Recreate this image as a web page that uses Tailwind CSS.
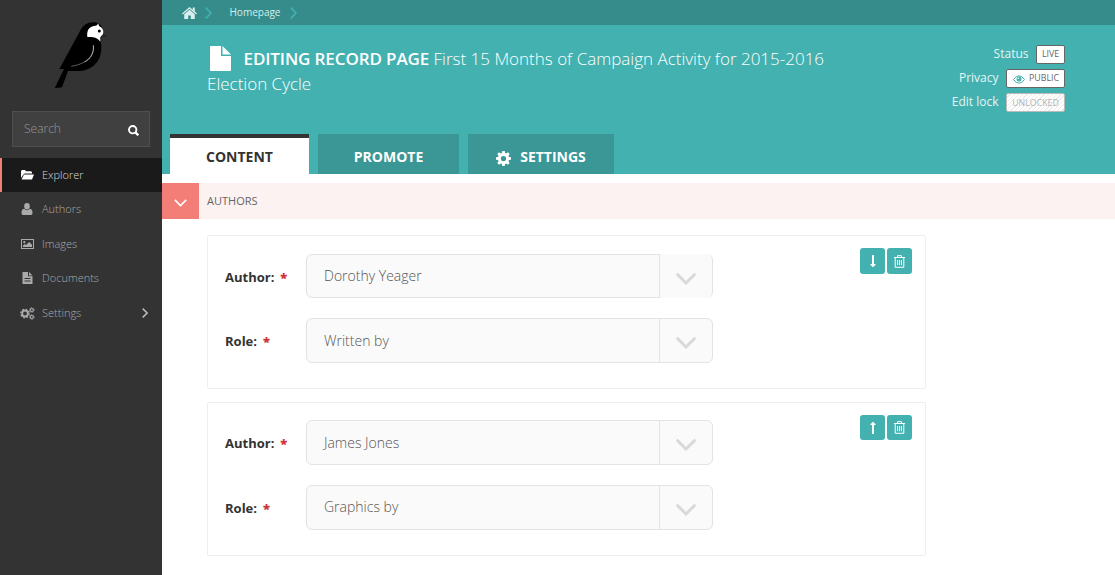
<!DOCTYPE html>
<html lang="en">
<head>
<meta charset="utf-8">
<title>Editing record page</title>
<script src="https://cdn.jsdelivr.net/npm/@tailwindcss/browser@4"></script>
</head>
<body class="flex h-[575px] w-[1115px] overflow-hidden bg-white font-['Open_Sans',sans-serif] whitespace-nowrap">
<svg class="hidden">
  <symbol id="chev" viewBox="0 0 20 12"><path d="M1.6 1.6 10 10l8.400-8.400" fill="none" stroke="currentColor" stroke-width="2.900" stroke-linecap="round"/></symbol>
  <symbol id="trash" viewBox="0 0 11 13"><path d="M0 2.500h11M3.500 2.500V.7h4v1.800M1.200 2.500v9.800h8.600V2.500M3.600 5v5.200M5.500 5v5.200M7.400 5v5.200" fill="none" stroke="currentColor"/></symbol>
  <symbol id="arrow" viewBox="0 0 6 12"><path d="M2 0h2v9h1.500v1L4.200 11 3.500 12h-1L1.800 11 .5 10V9H2z" fill="currentColor"/></symbol>
  <symbol id="gear" viewBox="0 0 16 16"><path fill="currentColor" fill-rule="evenodd" d="M6.700 0h2.600l.4 2.200 1.100.5 1.900-1.300 1.900 1.900-1.300 1.900.5 1.100 2.200.4v2.600l-2.200.4-.5 1.100 1.300 1.900-1.900 1.900-1.900-1.300-1.100.5-.4 2.200H6.700l-.4-2.200-1.100-.5-1.900 1.300-1.900-1.900 1.300-1.900-.5-1.100L0 9.300V6.700l2.200-.4.5-1.100-1.300-1.900 1.900-1.900 1.900 1.300 1.100-.5zM8 5.200a2.800 2.800 0 1 0 0 5.600 2.800 2.800 0 0 0 0-5.600z"/></symbol>
</svg>

<aside class="flex h-full w-[162px] shrink-0 flex-col bg-[#333]">
  <svg class="mt-[18px] ml-[50px] h-[74px] w-[62px] shrink-0" viewBox="150 54 186 222">
    <path d="M305 96l18 14h-22z" fill="#2a2627"/>
    <path d="M178 207 240 93C250 75 262 67 280 67c16 0 26 8 28 22l-6 34c2 8 2 16 2 24-2 42-32 68-76 66h-24l-18 49-22 3 28-58z"/>
    <path d="M262 111c-2-18 4-31 20-33 6 0 10-1 12-8l4 9c8 4 12 10 12 18 0 8-7 10-9 15v13c-8-12-20-15-39-14z" fill="#fff"/>
    <circle cx="298" cy="93" r="4.500"/>
    <path d="M280 136c3 32-22 56-66 63" fill="none" stroke="#aaa" stroke-width="1.600"/>
    <path d="M280 136c3 22-7 40-26 50" fill="none" stroke="#ddd" stroke-width="2"/>
  </svg>
  <div class="mt-[19px] ml-3 flex h-9 w-[138px] shrink-0 items-center justify-between border border-[#4f4f4f] bg-[#404040] pr-[10px] pl-[11px] text-[#999]">
    <span class="pb-[1px] text-[12px] font-light">Search</span>
    <svg class="mt-[2px] h-[11px] w-[11px]" viewBox="0 0 11 11" fill="none" stroke="#fff" stroke-width="1.900"><circle cx="4.700" cy="4.700" r="3.700"/><path d="m7.300 7.300 3 3" stroke-width="2.300"/></svg>
  </div>
  <nav class="mt-[11px] flex flex-col text-[11px] font-light text-[#aaa]">
    <a class="flex h-[34px] items-center border-l-2 border-[#f37e77] bg-[#1a1a1a] pl-[19px] text-white"><svg class="mr-[8px] h-[10px] w-[13px]" viewBox="0 0 13 10" fill="currentColor"><path d="M0 8V1l1-1h3l1 1.200h5l1 1V3.500H3.500L2 5z"/><path d="M.5 9.500 3 4.600h10L11 9.500z"/></svg><span class="text-[#ddd]">Explorer</span></a>
    <a class="flex h-[34px] items-center pl-[21px]"><svg class="mr-[9px] h-[12px] w-[12px]" viewBox="0 0 12 12" fill="currentColor"><ellipse cx="6" cy="3.300" rx="2.800" ry="3.300"/><path d="M3 5.700Q6 8.600 9 5.700c2 .3 2.500 2 2.500 4.300q0 2-1.500 2H2Q.5 12 .5 10C.5 7.700 1 6 3 5.700z"/></svg><span>Authors</span></a>
    <a class="flex h-[35px] items-center pt-[1px] pl-[21px]"><svg class="mr-[8px] h-[10px] w-[13px]" viewBox="0 0 13 10" fill="currentColor"><rect x=".5" y=".5" width="12" height="9" fill="none" stroke="currentColor"/><circle cx="3.300" cy="3.200" r="1.100"/><path d="M2 8V6.500l1.700-1.500 1.300 1L8.200 3 11 5.800V8z"/></svg><span>Images</span></a>
    <a class="flex h-[34px] items-center pl-[22px]"><svg class="mr-[9px] h-[12px] w-[11px]" viewBox="0 0 11 12"><path fill="currentColor" fill-rule="evenodd" d="M.5 0H6v4.300h4.500V12H.5zM2.500 6v1h6V6zm0 2.500v1h6v-1z"/><path fill="currentColor" d="M7 0l3.500 3.400H7z"/></svg><span>Documents</span></a>
    <a class="flex h-[35px] items-center pt-[1px] pr-[14px] pl-[20px]"><svg class="mr-[7px] h-[13px] w-[15px]" viewBox="0 0 15 13"><g fill="none" stroke="currentColor"><circle cx="5" cy="6.500" r="2.900" stroke-width="2"/><circle cx="5" cy="6.500" r="4.300" stroke-width="1.200" stroke-dasharray="1.700 1.680"/><circle cx="11.800" cy="3" r="1.500" stroke-width="1.200"/><circle cx="11.800" cy="10" r="1.500" stroke-width="1.200"/><circle cx="11.800" cy="3" r="2.400" stroke-width=".8" stroke-dasharray="1 .88"/><circle cx="11.800" cy="10" r="2.400" stroke-width=".8" stroke-dasharray="1 .88"/></g></svg><span>Settings</span><svg class="ml-auto h-[10px] w-[6px]" viewBox="0 0 6 10" fill="none" stroke="#bbb" stroke-width="1.500"><path d="m.7.6 4.400 4.400L.7 9.400"/></svg></a>
  </nav>
</aside>

<main class="flex w-[953px] flex-col">
  <div class="flex h-[25px] shrink-0 items-center bg-[#368c8a] pl-[20px] text-[10px] text-[#d5edec]">
    <svg class="mt-[1px] h-[12px] w-[15px]" viewBox="0 0 15 12" fill="#d9efee"><path d="M7.500 0 0 6.500l.8.900L7.500 1.700l6.700 5.700.8-.9-2.200-2V.6h-2v2.200z"/><path d="M7.500 2.800 2.200 7.300V12h4V8.600h2.600V12h4V7.300z"/></svg>
    <svg class="mt-[1px] ml-[8px] h-[12px] w-[7px]" viewBox="0 0 7 12" fill="none" stroke="#43b1b0" stroke-width="1.700"><path d="m.8.700 5.100 5.300-5.100 5.300"/></svg>
    <span class="ml-[17.5px] w-[51.5px]">Homepage</span>
    <svg class="mt-[1px] ml-[9px] h-[12px] w-[7px]" viewBox="0 0 7 12" fill="none" stroke="#43b1b0" stroke-width="1.700"><path d="m.8.700 5.100 5.300-5.100 5.300"/></svg>
  </div>
  <header class="flex h-[149px] shrink-0 flex-col justify-between bg-[#43b1b0]">
    <div class="flex justify-between pt-[18px] pr-[50px] pl-[45px]">
      <h1 class="pt-[3px] text-[17px] leading-[25px] font-light text-white"><svg class="mr-[12px] ml-[3px] inline-block h-[25px] w-[21px] align-[-6px]" viewBox="0 0 21 25" fill="#fff"><path d="M1 0h10v10h10v14q0 1-1 1H1q-1 0-1-1V1q0-1 1-1z"/><path d="M12.500 0 21 8.500h-8.500z"/></svg><span class="ml-[0.5px] font-semibold tracking-[-0.11px]">EDITING RECORD PAGE</span> First 15 Months of Campaign Activity for 2015-2016<br>Election Cycle</h1>
      <div class="flex flex-col items-end gap-[5px] pt-[2px] text-[12px] text-[#e6f5f5]">
        <div class="flex h-[19px] items-center gap-[7.500px]"><span class="pb-[2px]">Status</span><span class="flex h-[19px] w-[29px] items-center justify-center rounded-[2px] border border-[#666] bg-white pt-[1px] text-[8.8px] text-[#666]">LIVE</span></div>
        <div class="flex h-[19px] items-center gap-[7.500px]"><span class="pb-[2px]">Privacy</span><span class="flex h-[19px] w-[59px] items-center rounded-[2px] border border-[#666] bg-white pt-[1px] pl-[5px] text-[8.8px] text-[#666]"><svg class="mr-1 ml-[1px] h-[9px] w-[12px] shrink-0" viewBox="0 0 12 9"><path d="M.5 4.500Q3 .8 6 .8t5.500 3.700Q9 8.200 6 8.200T.5 4.500z" fill="none" stroke="#43b1b0"/><circle cx="6" cy="4" r="2.500" fill="#43b1b0"/><circle cx="5.300" cy="3.300" r=".8" fill="#fff"/></svg>PUBLIC</span></div>
        <div class="flex h-[19px] items-center gap-[7.500px]"><span class="pb-[2px]">Edit lock</span><span class="flex h-[19px] w-[59px] items-center justify-center rounded-[2px] border border-[#bbb] bg-[repeating-linear-gradient(135deg,#fff_0_2px,#ececec_2px_3px)] pt-[2px] text-[8.8px] text-[#b3b3b3]">UNLOCKED</span></div>
      </div>
    </div>
    <div class="flex h-10 gap-[9px] pl-2 text-[14px] font-bold text-white">
      <div class="flex w-[139px] items-center justify-center border-t-4 border-[#333] bg-white text-[#333]">CONTENT</div>
      <div class="flex w-[141px] items-center justify-center bg-[#3a9796] pt-[4px]">PROMOTE</div>
      <div class="flex w-[146px] items-center justify-center bg-[#3a9796] pt-[4px]"><svg class="mt-[4px] mr-[9px] h-[15px] w-[15px]"><use href="#gear"/></svg>SETTINGS</div>
    </div>
  </header>
  <div class="mt-[9px] flex h-9 shrink-0 items-center bg-[#fcf2f1] text-[11px] text-[#666]">
    <div class="flex h-9 w-[37px] items-center justify-center bg-[#f37e77] text-white"><svg class="mt-[4px] h-[8px] w-[13px]" viewBox="0 0 13 8" fill="none" stroke="currentColor" stroke-width="1.600"><path d="m.8.900 5.700 5.700L12.200.900"/></svg></div>
    <span class="ml-2 pt-[1px]">AUTHORS</span>
  </div>

  <section class="mt-4 ml-[45px] flex h-[154px] w-[719px] shrink-0 justify-between rounded-[2px] border border-[#eee] pr-[13px] pl-[17px]">
    <div class="flex flex-col gap-5 pt-[18px] text-[14px] font-light text-[#555]">
      <div class="flex h-[44px] items-center"><label class="w-[81px] pt-[4px] text-[13px] font-bold text-[#333]">Author: <b class="ml-[2.500px] text-[#cd3238]">*</b></label>
        <div class="flex h-full w-[407px]"><div class="flex w-[354px] items-center rounded-l-md border border-[#e3e3e3] bg-[#fafafa] pb-[2px] pl-[17px]">Dorothy Yeager</div><div class="flex w-[53px] items-center justify-center rounded-r-md border-r border-[#e3e3e3] bg-[#fafafa] pt-[5px] text-[#d9d9d9]"><svg class="h-[12px] w-5"><use href="#chev"/></svg></div></div></div>
      <div class="flex h-[45px] items-center"><label class="w-[81px] pt-[3px] text-[13px] font-bold text-[#333]">Role: <b class="ml-[2.500px] text-[#cd3238]">*</b></label>
        <div class="flex h-full w-[407px] rounded-md border border-[#e3e3e3] bg-[#fafafa]"><div class="flex w-[353px] items-center border-r border-[#e3e3e3] pl-[17px]">Written by</div><div class="flex w-[52px] items-center justify-center pt-[5px] text-[#d9d9d9]"><svg class="h-[12px] w-5"><use href="#chev"/></svg></div></div></div>
    </div>
    <div class="flex gap-[2px] pt-3 text-white">
      <button class="flex h-[26px] w-[25px] items-center justify-center rounded-[3px] bg-[#43b1b0]"><svg class="h-[12px] w-[6px]"><use href="#arrow"/></svg></button>
      <button class="flex h-[26px] w-[25px] items-center justify-center rounded-[3px] bg-[#43b1b0]"><svg class="h-[13px] w-[11px]"><use href="#trash"/></svg></button>
    </div>
  </section>

  <section class="mt-[13px] ml-[45px] flex h-[154px] w-[719px] shrink-0 justify-between rounded-[2px] border border-[#eee] pr-[13px] pl-[17px]">
    <div class="flex flex-col gap-5 pt-[17px] text-[14px] font-light text-[#555]">
      <div class="flex h-[45px] items-center"><label class="w-[81px] pt-[2px] text-[13px] font-bold text-[#333]">Author: <b class="ml-[2.500px] text-[#cd3238]">*</b></label>
        <div class="flex h-full w-[407px] rounded-md border border-[#e3e3e3] bg-[#fafafa]"><div class="flex w-[353px] items-center border-r border-[#e3e3e3] pl-[17px]">James Jones</div><div class="flex w-[52px] items-center justify-center pt-[5px] text-[#d9d9d9]"><svg class="h-[12px] w-5"><use href="#chev"/></svg></div></div></div>
      <div class="flex h-[45px] items-center"><label class="w-[81px] pt-[3px] text-[13px] font-bold text-[#333]">Role: <b class="ml-[2.500px] text-[#cd3238]">*</b></label>
        <div class="flex h-full w-[407px] rounded-md border border-[#e3e3e3] bg-[#fafafa]"><div class="flex w-[353px] items-center border-r border-[#e3e3e3] pb-[2px] pl-[17px]">Graphics by</div><div class="flex w-[52px] items-center justify-center pt-[5px] text-[#d9d9d9]"><svg class="h-[12px] w-5"><use href="#chev"/></svg></div></div></div>
    </div>
    <div class="flex gap-[2px] pt-3 text-white">
      <button class="flex h-[25px] w-[25px] items-center justify-center rounded-[3px] bg-[#43b1b0]"><svg class="h-[12px] w-[6px] rotate-180"><use href="#arrow"/></svg></button>
      <button class="flex h-[25px] w-[25px] items-center justify-center rounded-[3px] bg-[#43b1b0]"><svg class="h-[13px] w-[11px]"><use href="#trash"/></svg></button>
    </div>
  </section>
</main>
</body>
</html>
